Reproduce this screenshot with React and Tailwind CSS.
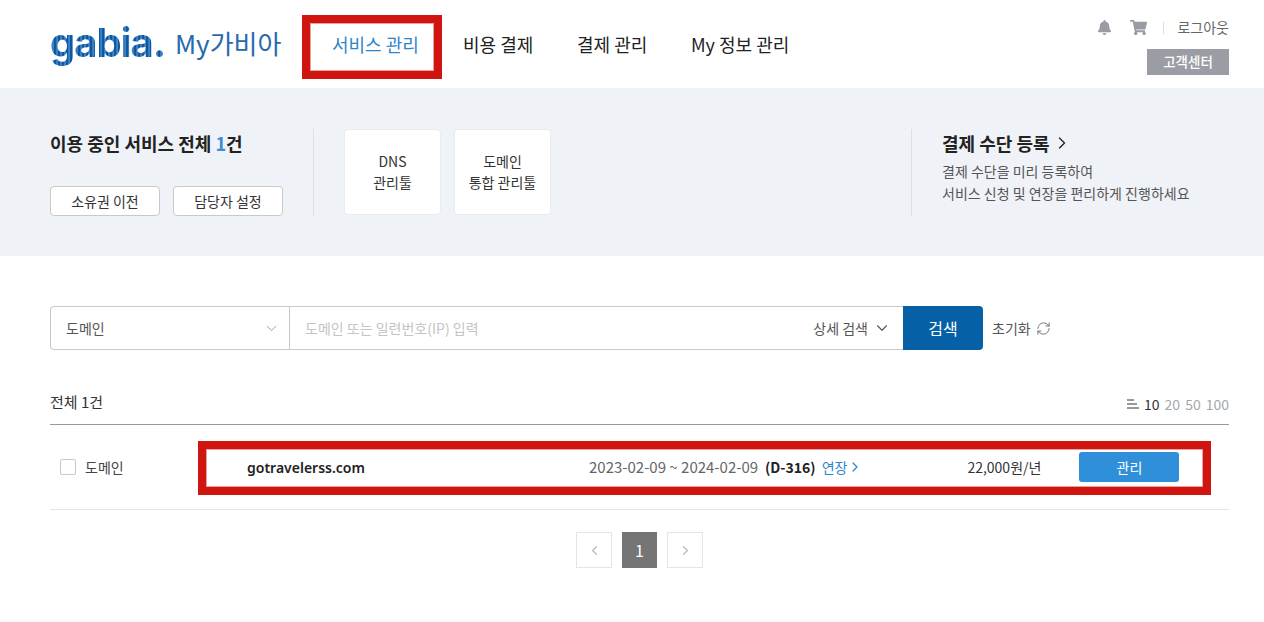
import { FaBell, FaShoppingCart } from "react-icons/fa";
import { ChevronDown, ChevronLeft, ChevronRight, RefreshCw } from "lucide-react";

const navItems = ["서비스 관리", "비용 결제", "결제 관리", "My 정보 관리"];

const Header = () => (
  <header className="flex h-[89px] border-b border-[#edf0f4] bg-white pl-[50px] pr-[35px]">
    <div className="flex h-[88px] w-[260px] items-center">
      <span className="mt-[-2px] w-[125px] bg-[repeating-linear-gradient(90deg,#14559f_0px,#14559f_2px,#4fa6dc_3px,#1a6ab5_4px)] bg-clip-text font-['Inter',sans-serif] text-[40px] leading-[60px] font-bold tracking-[-1px] text-transparent">
        gabia.
      </span>
      <span className="mt-[-3px] text-[26px] text-[#2a68ad]">My가비아</span>
    </div>
    <nav className="flex h-[88px] items-center pl-[22px] text-[18px] text-[#222]">
      {navItems.map((item, i) => (
        <span
          key={item}
          className={i === 0 ? "w-[131px] text-[#2f85c9]" : i === 1 || i === 2 ? "w-[114px]" : ""}
        >
          {item}
        </span>
      ))}
    </nav>
    <div className="ml-auto flex flex-col items-end pt-[17px]">
      <div className="flex h-[21px] items-center text-[14px] text-[#666]">
        <FaBell className="mr-[18px] text-[15px] text-[#999ca2]" />
        <FaShoppingCart className="text-[17px] text-[#999ca2]" />
        <span className="mr-[6px] ml-[16px] h-[12px] w-px bg-[#ddd]" />
        <span className="ml-[7px]">로그아웃</span>
      </div>
      <button className="mt-[11px] h-[26px] w-[82px] bg-[#9a9da4] pb-[2px] text-[13.5px] font-medium text-white">고객센터</button>
    </div>
  </header>
);

const ToolCard = ({ top, bottom }) => (
  <div className="flex h-[86px] w-[97px] flex-col items-center justify-center rounded-[4px] border border-[#e8ebf0] bg-white text-[14px] leading-[21px] text-[#333]">
    <span>{top}</span>
    <span>{bottom}</span>
  </div>
);

const Summary = () => (
  <section className="flex h-[167px] items-start bg-[#eff2f7] pt-[40px] pl-[50px]">
    <div className="h-[87px] w-[264px] border-r border-[#dcdfe4]">
      <h2 className="text-[18px] leading-[28px] font-bold text-[#222]">
        이용 중인 서비스 전체 <span className="text-[#3a8dd6]">1</span>건
      </h2>
      <div className="mt-[29px] flex gap-[13px] text-[14px] text-[#333]">
        <button className="h-[30px] w-[110px] rounded-[4px] border border-[#c9c9c9] bg-white">소유권 이전</button>
        <button className="h-[30px] w-[110px] rounded-[4px] border border-[#c9c9c9] bg-white">담당자 설정</button>
      </div>
    </div>
    <div className="ml-[30px] flex w-[567px] gap-[13px]">
      <ToolCard top="DNS" bottom="관리툴" />
      <ToolCard top="도메인" bottom="통합 관리툴" />
    </div>
    <div className="h-[87px] border-l border-[#dcdfe4] pl-[30px]">
      <div className="flex h-[28px] items-center text-[18px] font-bold text-[#222]">
        결제 수단 등록
        <ChevronRight size={20} strokeWidth={1.6} className="ml-[2px]" />
      </div>
      <p className="mt-[3px] text-[14px] leading-[22px] text-[#555]">
        결제 수단을 미리 등록하여
        <br />
        서비스 신청 및 연장을 편리하게 진행하세요
      </p>
    </div>
  </section>
);

const SearchBar = () => (
  <div className="mt-[50px] flex items-center">
    <div className="flex h-[44px] w-[853px] rounded-l-[4px] border border-r-0 border-[#c9c9c9] text-[14px]">
      <div className="flex w-[239px] items-center justify-between border-r border-[#c9c9c9] pr-[9px] pl-[15px] text-[#555]">
        도메인
        <ChevronDown size={17} strokeWidth={1.3} className="text-[#999]" />
      </div>
      <div className="flex flex-1 items-center justify-between pr-[12px] pl-[15px]">
        <span className="text-[#c4c4c4]">도메인 또는 일련번호(IP) 입력</span>
        <span className="flex items-center text-[#555]">
          상세 검색
          <ChevronDown size={18} strokeWidth={1.5} className="ml-[5px]" />
        </span>
      </div>
    </div>
    <button className="h-[44px] w-[80px] rounded-r-[4px] bg-[#0560a6] text-[16px] text-white">검색</button>
    <span className="ml-[9px] text-[14px] text-[#555]">초기화</span>
    <RefreshCw size={15} strokeWidth={1.4} className="ml-[5px] text-[#666]" />
  </div>
);

const ListHead = () => (
  <div className="mt-[39px] flex h-[36px] items-start justify-between border-b border-[#999]">
    <span className="mt-[-1px] text-[15px] leading-[28px] text-[#333]">전체 1건</span>
    <div className="flex items-center pt-[5px] text-[14px] leading-[20px] text-[#a3a8ae]">
      <span className="mr-[5px] flex w-[12px] flex-col items-start gap-[2px]">
        <i className="h-[2px] w-[7px] bg-[#999]" />
        <i className="h-[2px] w-[10px] bg-[#999]" />
        <i className="h-[2px] w-[12px] bg-[#999]" />
      </span>
      <span className="text-[#333]">10</span>
      <span className="ml-[5px]">20</span>
      <span className="ml-[5px]">50</span>
      <span className="ml-[5px]">100</span>
    </div>
  </div>
);

const ServiceRow = () => (
  <div className="flex h-[85px] items-center border-b border-[#e5e5e5] text-[14px]">
    <span className="ml-[10px] h-[16px] w-[16px] rounded-[2px] border border-[#c9c9c9]" />
    <span className="ml-[9px] w-[162px] text-[#444]">도메인</span>
    <span className="w-[342px] font-['Noto_Sans',sans-serif] text-[14px] font-semibold text-[#222]">gotravelerss.com</span>
    <span className="text-[15px] text-[#666]">2023-02-09 ~ 2024-02-09</span>
    <span className="ml-[7px] font-bold text-[#222]">(D-316)</span>
    <span className="ml-[6px] flex items-center text-[#2f85c9]">
      연장
      <ChevronRight size={16} strokeWidth={1.8} />
    </span>
    <span className="ml-[104px] text-[#333]">22,000원/년</span>
    <button className="ml-[38px] h-[30px] w-[100px] rounded-[3px] bg-[#2f8fd8] text-white">관리</button>
  </div>
);

const Pagination = () => (
  <div className="mt-[22px] flex justify-center">
    <span className="flex h-[36px] w-[36px] items-center justify-center border border-[#e5e5e5] text-[#bbb]">
      <ChevronLeft size={15} />
    </span>
    <span className="ml-[10px] flex h-[36px] w-[35px] items-center justify-center bg-[#757575] text-[16px] text-white">1</span>
    <span className="ml-[10px] flex h-[36px] w-[36px] items-center justify-center border border-[#e5e5e5] text-[#bbb]">
      <ChevronRight size={15} />
    </span>
  </div>
);

export default function App() {
  return (
    <div className="relative min-h-[622px] overflow-hidden bg-white font-['Noto_Sans_CJK_KR','Noto_Sans',sans-serif]">
      <Header />
      <Summary />
      <main className="w-[1229px] pl-[50px]">
        <SearchBar />
        <ListHead />
        <ServiceRow />
        <Pagination />
      </main>
      {/* red annotation boxes drawn over the page */}
      <div className="absolute top-[15px] left-[302px] h-[64px] w-[140px] border-[8px] border-[#d0140f] shadow-[inset_0_0_0_1px_#eba0a0]" />
      <div className="absolute top-[441px] left-[198px] h-[54px] w-[1013px] border-[8px] border-[#d0140f] shadow-[inset_0_0_0_1px_#eba0a0]" />
    </div>
  );
}
